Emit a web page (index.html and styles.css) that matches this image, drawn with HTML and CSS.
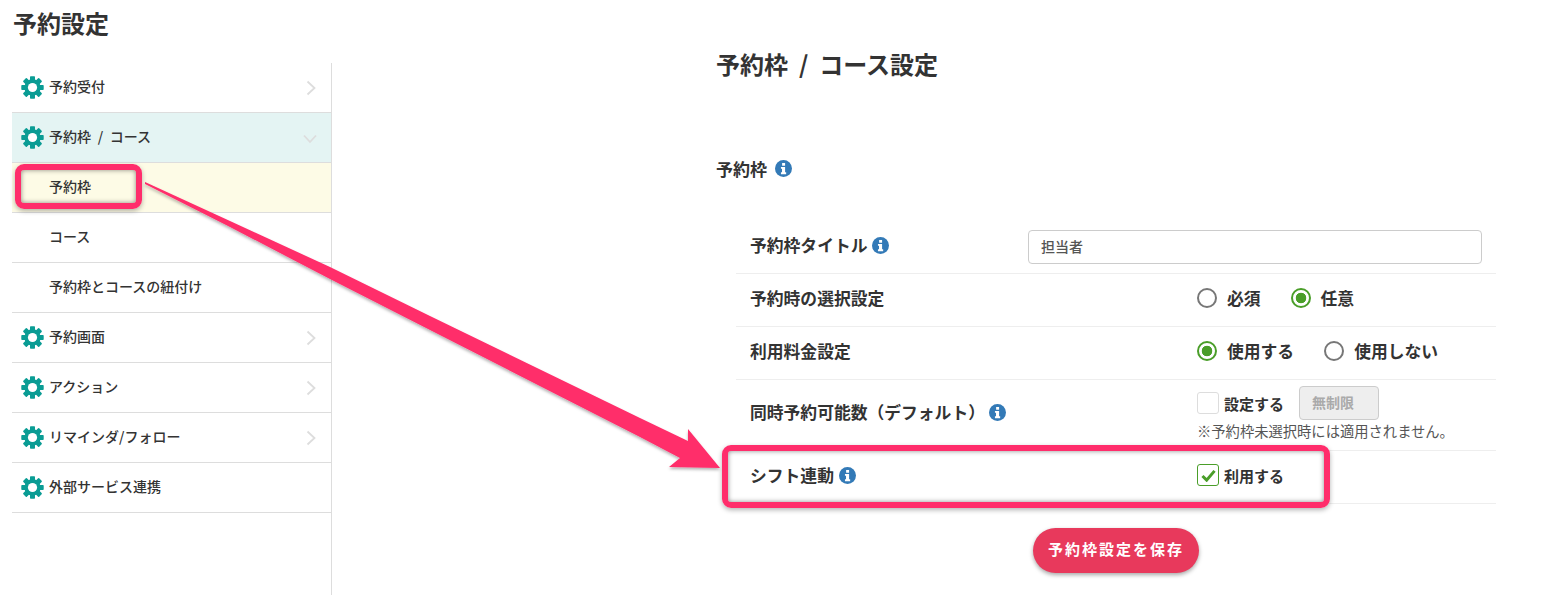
FILE: index.html
```html
<!DOCTYPE html>
<html lang="ja">
<head>
<meta charset="utf-8">
<title>予約設定</title>
<link rel="stylesheet" href="styles.css">
</head>
<body>
<svg class="defs" width="0" height="0">
  <defs>
    <symbol id="gear" viewBox="0 0 24 24">
      <g fill="#0a9c94">
        <rect x="9.4" y="0.3" width="5.2" height="23.4" rx="0.8"/>
        <rect x="9.4" y="0.3" width="5.2" height="23.4" rx="0.8" transform="rotate(45 12 12)"/>
        <rect x="9.4" y="0.3" width="5.2" height="23.4" rx="0.8" transform="rotate(90 12 12)"/>
        <rect x="9.4" y="0.3" width="5.2" height="23.4" rx="0.8" transform="rotate(135 12 12)"/>
      </g>
      <circle cx="12" cy="12" r="6.6" fill="none" stroke="#0a9c94" stroke-width="3.8"/>
      <circle cx="12" cy="12" r="4.8" fill="#fff"/>
    </symbol>
    <symbol id="info" viewBox="0 0 16 16">
      <circle cx="8" cy="8" r="8" fill="#337ab7"/>
      <rect x="6.7" y="2.8" width="2.8" height="2.6" fill="#fff"/>
      <path d="M5.6 6.6h3.9v5h1v1.7H5.6v-1.7h1v-3.3h-1z" fill="#fff"/>
    </symbol>
    <symbol id="chev-right" viewBox="0 0 10 16">
      <path d="M1.5 1.5 8.5 8l-7 6.5" fill="none" stroke="#ddd" stroke-width="1.8"/>
    </symbol>
    <symbol id="chev-down" viewBox="0 0 14 10">
      <path d="M1 1.5 7 8l6-6.5" fill="none" stroke="#ddd" stroke-width="1.8"/>
    </symbol>
  </defs>
</svg>

<div class="page">
  <div class="left">
    <h1 class="page-title">予約設定</h1>
    <nav class="sidebar">
      <div class="nav-item"><svg class="gear"><use href="#gear"/></svg><span>予約受付</span><svg class="chev-r"><use href="#chev-right"/></svg></div>
      <div class="nav-item nav-item--open"><svg class="gear"><use href="#gear"/></svg><span>予約枠 / コース</span><svg class="chev-d"><use href="#chev-down"/></svg></div>
      <div class="nav-sub nav-sub--active">予約枠</div>
      <div class="nav-sub">コース</div>
      <div class="nav-sub">予約枠とコースの紐付け</div>
      <div class="nav-item"><svg class="gear"><use href="#gear"/></svg><span>予約画面</span><svg class="chev-r"><use href="#chev-right"/></svg></div>
      <div class="nav-item"><svg class="gear"><use href="#gear"/></svg><span>アクション</span><svg class="chev-r"><use href="#chev-right"/></svg></div>
      <div class="nav-item"><svg class="gear"><use href="#gear"/></svg><span>リマインダ/フォロー</span><svg class="chev-r"><use href="#chev-right"/></svg></div>
      <div class="nav-item"><svg class="gear"><use href="#gear"/></svg><span>外部サービス連携</span></div>
    </nav>
  </div>

  <main class="main">
    <h2 class="main-title">予約枠 / コース設定</h2>
    <h3 class="section-title">予約枠<svg class="info"><use href="#info"/></svg></h3>
    <div class="rows">
      <div class="row row--first">
        <div class="label label--narrow">予約枠タイトル<svg class="info"><use href="#info"/></svg></div>
        <div class="text-input">担当者</div>
      </div>
      <div class="row">
        <div class="label">予約時の選択設定</div>
        <div class="choices">
          <span class="choice"><span class="radio"></span>必須</span>
          <span class="choice"><span class="radio radio--on"></span>任意</span>
        </div>
      </div>
      <div class="row">
        <div class="label">利用料金設定</div>
        <div class="choices">
          <span class="choice"><span class="radio radio--on"></span>使用する</span>
          <span class="choice"><span class="radio"></span>使用しない</span>
        </div>
      </div>
      <div class="row row--tall">
        <div class="label">同時予約可能数（デフォルト）<svg class="info info--far"><use href="#info"/></svg></div>
        <div class="stack">
          <div class="check-line">
            <span class="check"></span><span class="check-text">設定する</span>
            <span class="limit">無制限</span>
          </div>
          <div class="note">※予約枠未選択時には適用されません。</div>
        </div>
      </div>
      <div class="row">
        <div class="label">シフト連動<svg class="info"><use href="#info"/></svg></div>
        <div class="check-line">
          <span class="check check--on">
            <svg class="tick" viewBox="0 0 16 14"><path d="M1.5 7.5 6 12l8.5-10" fill="none" stroke="#4a9e29" stroke-width="3.2"/></svg>
          </span><span class="check-text">利用する</span>
        </div>
      </div>
    </div>
    <div class="save-wrap"><button class="save" type="button">予約枠設定を保存</button></div>
  </main>
</div>

<svg class="arrow" width="1541" height="595" viewBox="0 0 1541 595">
  <defs>
    <filter id="arrow-shadow" x="-5%" y="-5%" width="110%" height="110%">
      <feDropShadow dx="0" dy="2" stdDeviation="1.5" flood-color="#000" flood-opacity=".3"/>
    </filter>
  </defs>
  <polygon filter="url(#arrow-shadow)" fill="#ff2d6b" points="145,182 230,221 330,267 430,316 640,418 688,441 688,429 720,468 669,467 680,458 640,437 430,330 330,279 230,227 145,184"/>
</svg>
<div class="callout callout--nav"></div>
<div class="callout callout--row"></div>
</body>
</html>
```
FILE: styles.css
```css
* { box-sizing: border-box; }

html, body {
  margin: 0;
  height: 595px;
  overflow: hidden;
  background: #fff;
}

body {
  position: relative;
  font-family: "Noto Sans CJK JP", "Liberation Sans", sans-serif;
  color: #333;
}

.defs { position: absolute; }

.page {
  display: flex;
  height: 595px;
}

.left {
  flex: none;
  width: 332px;
  margin-left: 12px;
  display: flex;
  flex-direction: column;
}

.page-title {
  margin: 6px 0 0 1px;
  height: 57px;
  font-size: 24px;
  line-height: 34px;
  font-weight: 700;
}

.sidebar {
  flex: 1;
  width: 320px;
  border-right: 1px solid #ddd;
}

.nav-item,
.nav-sub {
  height: 50px;
  display: flex;
  align-items: center;
  border-bottom: 1px solid #ddd;
  font-size: 14px;
  font-weight: 500;
  padding-bottom: 4px;
}

.nav-item { padding-left: 9px; }
.nav-item--open { background: #e4f4f3; }

.nav-item span { margin-left: 5px; flex: 1; word-spacing: 3.5px; }

.nav-sub { padding-left: 37px; }
.nav-sub--active { background: #fdfbe6; }

.gear {
  flex: none;
  width: 23px;
  height: 23px;
  margin-top: 4px;
}

.chev-r {
  flex: none;
  width: 10px;
  height: 16px;
  margin: 5px 15px 0 0;
}

.chev-d {
  flex: none;
  width: 14px;
  height: 10px;
  margin: 6px 14px 0 0;
}

.main {
  flex: 1;
  padding: 47px 0 0 373px;
}

.main-title {
  margin: 0 0 0 -1px;
  font-size: 24px;
  line-height: 34px;
  font-weight: 700;
  word-spacing: 5.5px;
}

.section-title {
  margin: 70px 0 0 -1px;
  display: flex;
  align-items: center;
  height: 34px;
  font-size: 17px;
  font-weight: 700;
}

.section-title .info { margin-left: 8px; }

.info {
  flex: none;
  width: 17px;
  height: 17px;
  margin-left: 5px;
}

.info--far { margin-left: 4px; }

.rows {
  width: 760px;
  margin: 36px 0 0 19px;
}

.row {
  display: flex;
  align-items: center;
  height: 53px;
  padding-bottom: 4px;
  border-bottom: 1px solid #eee;
}

.row--tall { height: 71px; padding-bottom: 6px; }

.label {
  flex: none;
  width: 461px;
  padding-left: 14px;
  display: flex;
  align-items: center;
  font-size: 16.8px;
  font-weight: 700;
}

.label--narrow { width: 292px; }

.text-input {
  width: 454px;
  height: 34px;
  margin-top: 4px;
  padding-left: 12px;
  border: 1px solid #ccc;
  border-radius: 4px;
  font-size: 14px;
  font-weight: 500;
  line-height: 30px;
  color: #555;
}

.choices {
  display: flex;
  gap: 30px;
}

.choice {
  display: flex;
  align-items: center;
  gap: 10px;
  font-size: 16.8px;
  font-weight: 700;
}

.radio {
  width: 20px;
  height: 20px;
  border: 2px solid #777;
  border-radius: 50%;
  background: #fff;
}

.radio--on {
  border-color: #4a9e29;
  background: radial-gradient(circle, #4a9e29 0 5px, #fff 5.6px);
}

.stack { padding-top: 3px; }

.check-line {
  display: flex;
  align-items: center;
}

.check {
  display: flex;
  align-items: center;
  justify-content: center;
  width: 22px;
  height: 22px;
  border: 1px solid #ddd;
  border-radius: 3px;
}

.check--on { border-color: #4a9e29; }

.tick {
  width: 15px;
  height: 13px;
}

.check-text {
  margin-left: 5px;
  font-size: 15px;
  font-weight: 700;
}

.limit {
  width: 80px;
  height: 34px;
  margin-left: 15px;
  padding-left: 12px;
  border: 1px solid #ccc;
  border-radius: 4px;
  background: #eee;
  color: #aaa;
  font-size: 14px;
  font-weight: 700;
  line-height: 30px;
}

.note {
  margin-top: 1px;
  font-size: 14.3px;
  line-height: 20px;
  color: #555;
}

.save-wrap {
  margin: 24px 0 0 316px;
}

.save {
  display: block;
  width: 166px;
  height: 45px;
  padding: 0 0 4px;
  border: 0;
  border-radius: 23px;
  background: #e8395c;
  box-shadow: 0 2px 4px rgba(0, 0, 0, .35);
  color: #fff;
  font-family: inherit;
  font-size: 15px;
  font-weight: 700;
  letter-spacing: 2px;
}

.arrow {
  position: absolute;
  left: 0;
  top: 0;
}

.callout {
  position: absolute;
  border: 6px solid #ff2d6b;
  border-radius: 9px;
  box-shadow: 0 2px 5px rgba(0, 0, 0, .3), inset 0 0 5px rgba(0, 0, 0, .45);
}

.callout--nav {
  left: 15px;
  top: 164px;
  width: 127px;
  height: 45px;
}

.callout--row {
  left: 722px;
  top: 445px;
  width: 608px;
  height: 63px;
}
```
